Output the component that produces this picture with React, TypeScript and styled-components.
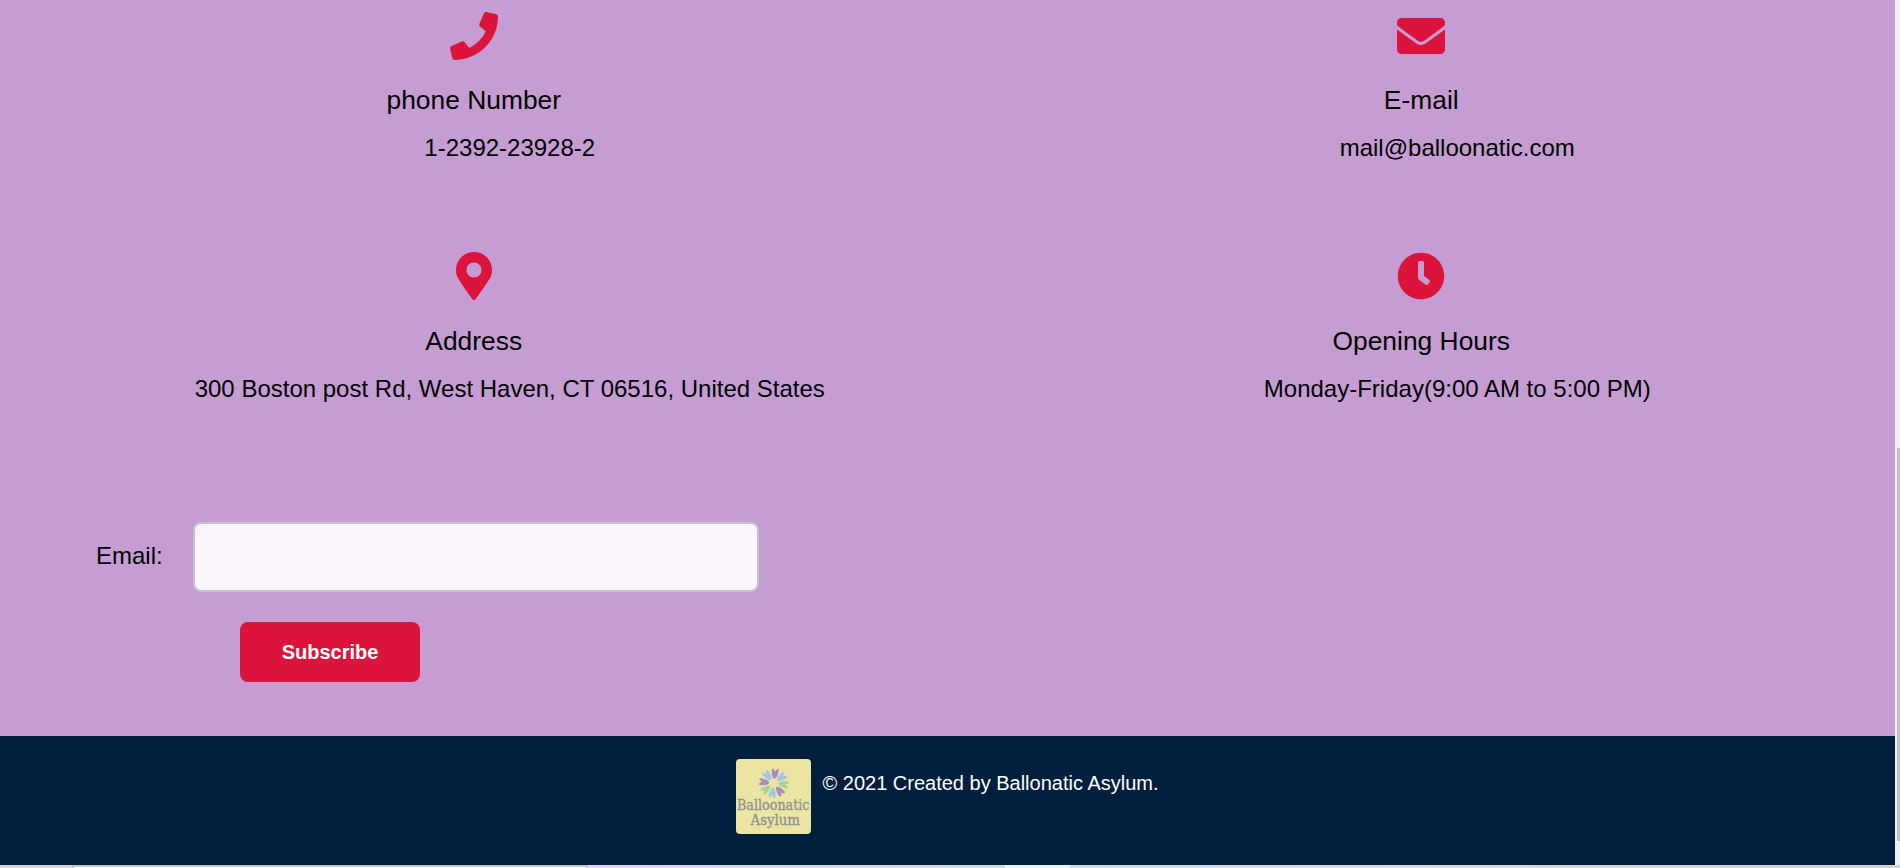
import React from "react";
import styled, { createGlobalStyle } from "styled-components";
import { FaPhone, FaEnvelope, FaMapMarkerAlt, FaClock } from "react-icons/fa";

const GlobalStyle = createGlobalStyle`
  * { box-sizing: border-box; }
  body {
    margin: 0;
    background: #f0f0f0;
    color: #000;
    font-family: Arial, "Liberation Sans", sans-serif;
    overflow: hidden;
  }
`;

const Window = styled.div`
  display: flex;
  flex-direction: column;
  width: 1900px;
  height: 868px;
`;

const Viewport = styled.div`
  display: flex;
  height: 865px;
`;

const Page = styled.div`
  display: flex;
  flex-direction: column;
  width: 1895px;
`;

const ScrollTrack = styled.div`
  width: 5px;
  padding: 448px 0 0 2px;
  background: #f0f0f0;
`;

const ScrollThumb = styled.div`
  height: 393px;
  background: #c1c1c1;
`;

const Contact = styled.main`
  height: 736px;
  background: #c59dd2;
`;

const Grid = styled.section`
  display: grid;
  grid-template-columns: 1fr 1fr;
  grid-template-rows: 240px 241px;
  height: 522px;
  padding-top: 12px;
`;

const Card = styled.article<{ $titleGap: number }>`
  display: flex;
  flex-direction: column;
  align-items: center;
  gap: ${(p) => p.$titleGap}px;
  svg {
    display: block;
    width: auto;
    height: 48px;
    color: #dc143c;
  }
`;

const CardBody = styled.div`
  display: flex;
  flex-direction: column;
  align-items: center;
`;

const CardTitle = styled.h3`
  margin: 0;
  font-size: 26.4px;
  font-weight: 400;
  line-height: 30px;
`;

const CardText = styled.p`
  margin: 19px 0 0;
  padding-left: 72px;
  font-size: 24px;
  line-height: 28px;
`;

const Form = styled.form`
  display: flex;
  flex-direction: column;
  align-items: flex-start;
  gap: 30px;
  padding-left: 96px;
`;

const Field = styled.div`
  display: flex;
  align-items: center;
`;

const Label = styled.label`
  width: 97px;
  padding-bottom: 3px;
  font-size: 24px;
  line-height: 28px;
`;

const Input = styled.input`
  width: 566px;
  height: 70px;
  padding: 12px 20px;
  border: 2px solid #c5c0c9;
  border-radius: 8px;
  background: #faf5fc;
  font-size: 24px;
  outline: none;
`;

const Button = styled.button`
  width: 180px;
  height: 60px;
  margin-left: 144px;
  padding: 0;
  border: 0;
  border-radius: 8px;
  background: #dc143c;
  color: #fff;
  font: bold 20px Arial, "Liberation Sans", sans-serif;
`;

const Footer = styled.footer`
  display: flex;
  justify-content: center;
  gap: 11px;
  height: 129px;
  padding-top: 23px;
  background: #001f3d;
  color: #fff;
`;

const Logo = styled.svg`
  display: block;
  width: 75px;
  height: 75px;
  overflow: visible;
`;

const Copyright = styled.p`
  margin: 13px 0 0;
  font-size: 20px;
  line-height: 23px;
`;

const Edge = styled.div`
  display: flex;
  height: 3px;
`;

const EdgePart = styled.div<{ $width: number; $fill: string }>`
  width: ${(p) => p.$width}px;
  background: ${(p) => p.$fill};
`;

const EdgeBox = styled.div`
  width: 516px;
  border: 2px solid #c5c5c8;
  border-bottom: 0;
  background: #fff;
`;

const PETALS = ["#a98bc4", "#9fc6e6", "#a9d29a", "#a98bc4", "#9fc6e6", "#a9d29a", "#a98bc4", "#9fc6e6"];

const cards = [
  { icon: <FaPhone />, title: "phone Number", text: "1-2392-23928-2", titleGap: 25 },
  { icon: <FaEnvelope />, title: "E-mail", text: "mail@balloonatic.com", titleGap: 25 },
  {
    icon: <FaMapMarkerAlt />,
    title: "Address",
    text: "300 Boston post Rd, West Haven, CT 06516, United States",
    titleGap: 26,
  },
  { icon: <FaClock />, title: "Opening Hours", text: "Monday-Friday(9:00 AM to 5:00 PM)", titleGap: 26 },
];

function BrandLogo() {
  return (
    <Logo viewBox="0 0 75 75">
      <rect width="75" height="75" rx="4" fill="#ebe5a1" />
      <g transform="translate(37.7 24.3)">
        {PETALS.map((color, i) => (
          <path
            key={i}
            transform={`rotate(${i * 45 + 7})`}
            d="M0-4.5C-1.8-5.2-2.6-7-2.9-9L-3.6-13Q-3.5-14.6-2.2-14.7Q-.8-14 0-11.8Q.8-14 2.2-14.7Q3.5-14.6 3.6-13L2.9-9C2.6-7 1.8-5.2 0-4.5Z"
            fill={color}
          />
        ))}
      </g>
      <g fill="#8b9292" stroke="#8b9292" strokeWidth=".3" fontFamily='"DejaVu Serif", serif' fontSize="14">
        <text x="1" y="51" textLength="72.5" lengthAdjust="spacingAndGlyphs">Balloonatic</text>
        <text x="14.5" y="65.7" textLength="49.5" lengthAdjust="spacingAndGlyphs">Asylum</text>
      </g>
    </Logo>
  );
}

export default function App() {
  return (
    <Window>
      <GlobalStyle />
      <Viewport>
        <Page>
          <Contact>
            <Grid>
              {cards.map((card) => (
                <Card key={card.title} $titleGap={card.titleGap}>
                  {card.icon}
                  <CardBody>
                    <CardTitle>{card.title}</CardTitle>
                    <CardText>{card.text}</CardText>
                  </CardBody>
                </Card>
              ))}
            </Grid>
            <Form>
              <Field>
                <Label htmlFor="email">Email:</Label>
                <Input id="email" type="email" />
              </Field>
              <Button type="button">Subscribe</Button>
            </Form>
          </Contact>
          <Footer>
            <BrandLogo />
            <Copyright>© 2021 Created by Ballonatic Asylum.</Copyright>
          </Footer>
        </Page>
        <ScrollTrack>
          <ScrollThumb />
        </ScrollTrack>
      </Viewport>
      <Edge>
        <EdgePart $width={72} $fill="#d9d2d0" />
        <EdgeBox />
        <EdgePart $width={417} $fill="linear-gradient(90deg, #e6d4ea, #ddd3df 35%, #d5d5dc)" />
        <EdgePart $width={65} $fill="#f0f0f0" />
        <EdgePart $width={830} $fill="linear-gradient(90deg, #d5d5de, #dcd8e2 35%, #d5d4d2 60%, #d5d2cf)" />
      </Edge>
    </Window>
  );
}
